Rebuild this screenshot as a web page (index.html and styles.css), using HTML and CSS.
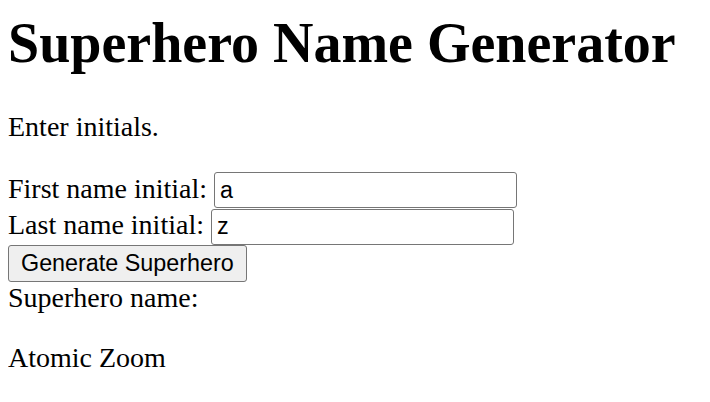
FILE: index.html
```html
<!DOCTYPE html>
<html>
<head>
<meta charset="utf-8">
<title>Superhero Name Generator</title>
<link rel="stylesheet" href="styles.css">
</head>
<body>
<h1 class="title">Superhero Name Generator</h1>
<p class="intro">Enter initials.</p>
<form class="form">
<label class="row">First name initial: <input class="field" type="text" value="a"></label><br>
<label class="row">Last name initial: <input class="field" type="text" value="z"></label><br>
<button class="btn" type="button">Generate Superhero</button><br>
<div class="result-label">Superhero name:</div>
</form>
<p class="result">Atomic Zoom</p>
</body>
</html>
```
FILE: styles.css
```css
html, body {
  background: #fff;
}
body {
  margin: 0 8px;
  font-family: "Liberation Serif", "Times New Roman", serif;
  font-size: 28px;
  color: #000;
}
.title {
  font-size: 56px;
  font-weight: bold;
  margin: 11px 0 36px;
}
.intro {
  margin: 0 0 29px;
}
.form {
  margin: 0;
}
.field {
  box-sizing: border-box;
  width: 303px;
  height: 36px;
  margin: 0 0 0.5px;
  padding: 0 5px;
  border: 1px solid #767676;
  border-radius: 3px;
  background: #fff;
  color: #000;
  font-family: "Liberation Sans", Arial, sans-serif;
  font-size: 23.33px;
}
.btn {
  box-sizing: border-box;
  height: 36.5px;
  margin: 0;
  padding: 0 12px;
  border: 1px solid #767676;
  border-radius: 3px;
  background: #efefef;
  color: #000;
  font-family: "Liberation Sans", Arial, sans-serif;
  font-size: 23.33px;
}
.result {
  margin: 28px 0;
}
```
